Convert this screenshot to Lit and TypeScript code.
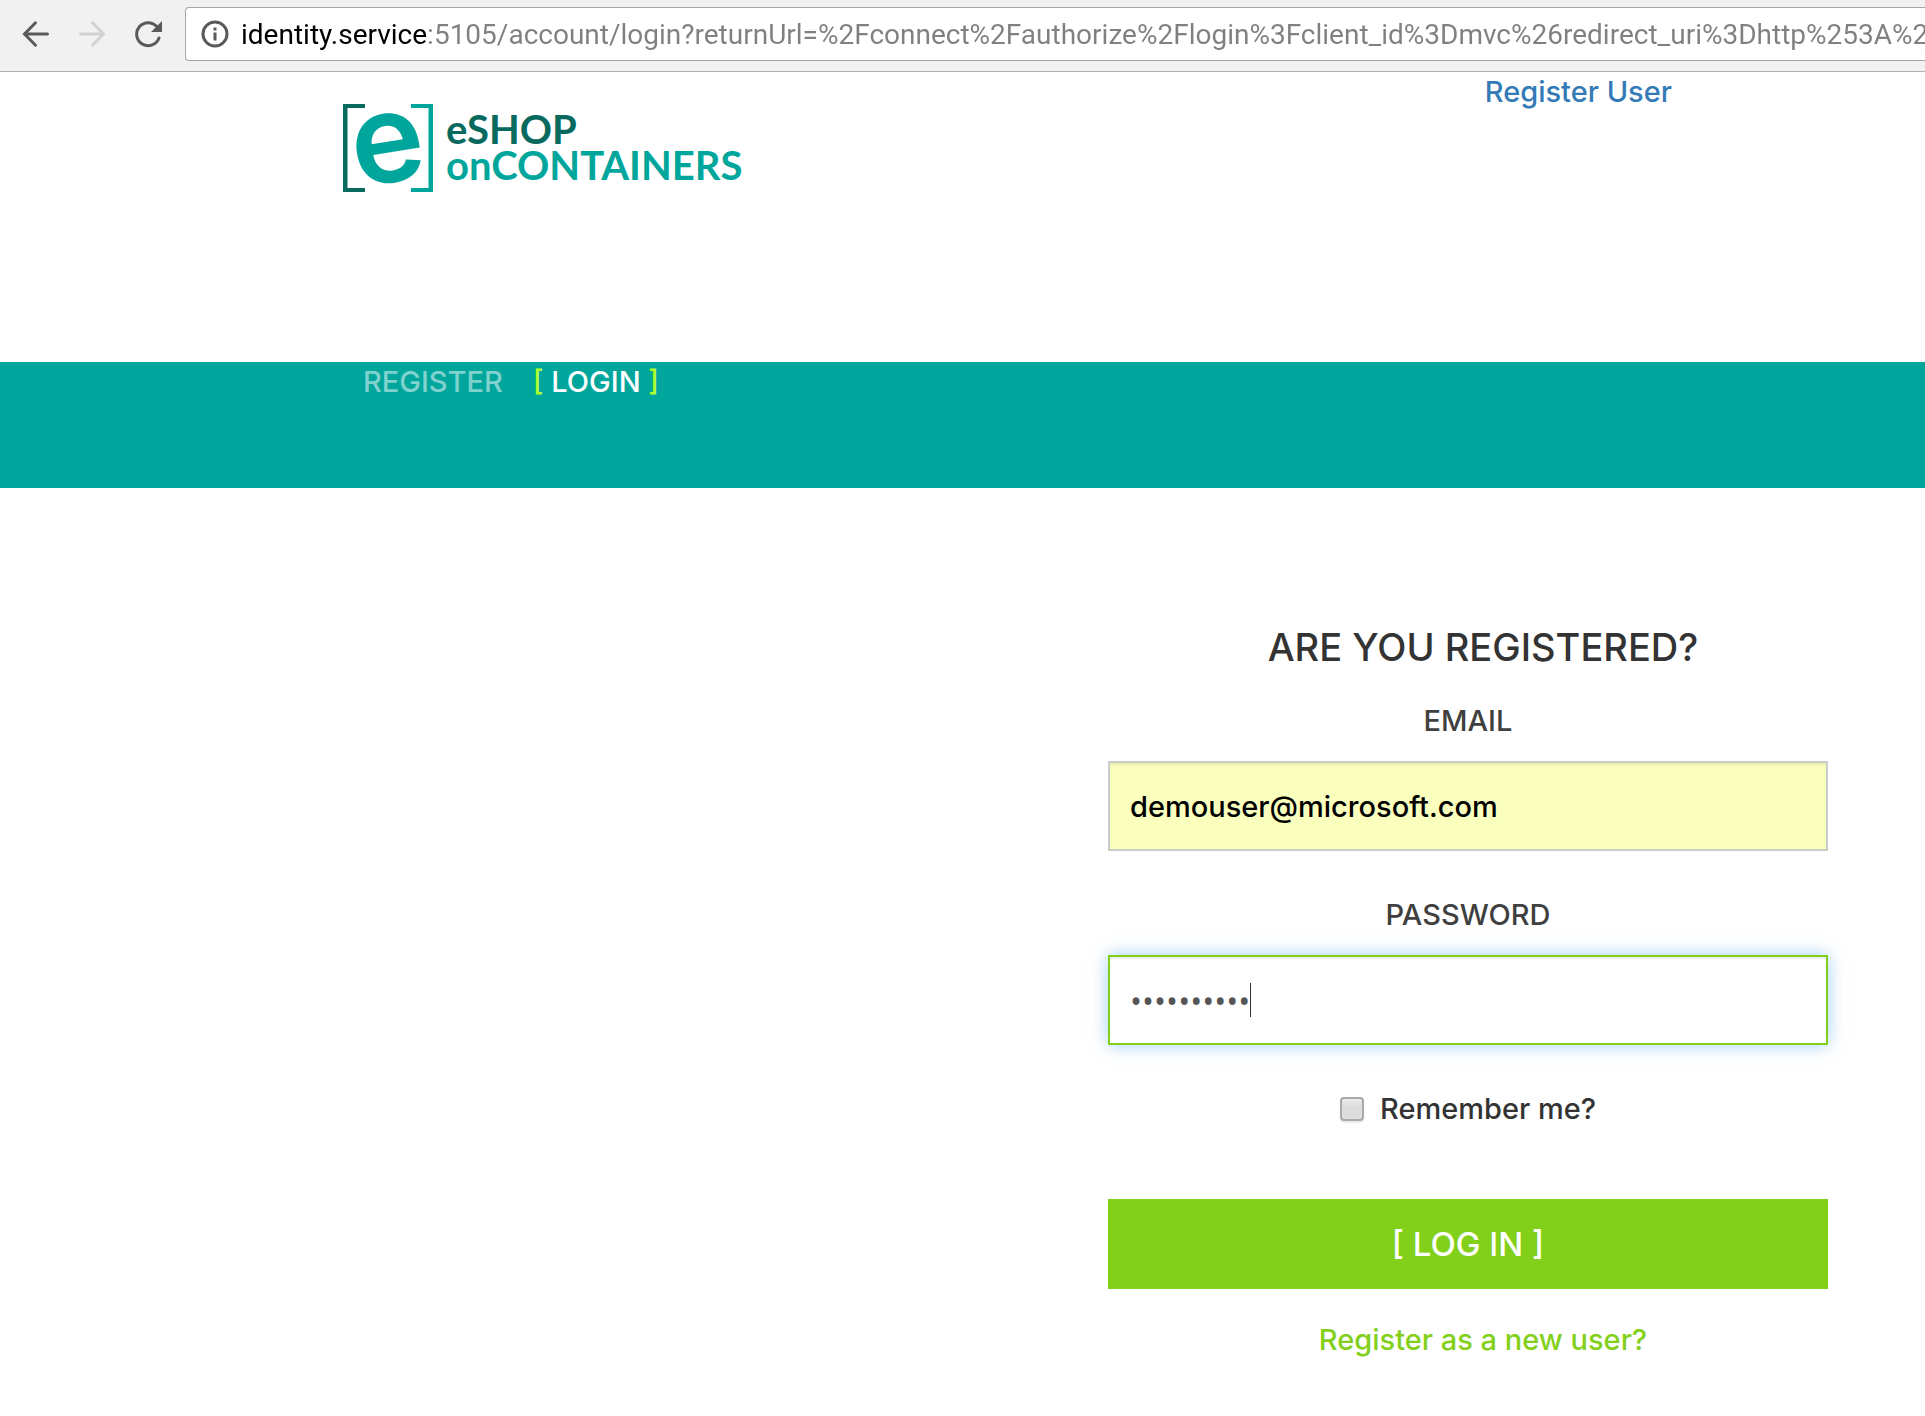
import { LitElement, html, css } from "lit";
import { customElement, state } from "lit/decorators.js";

@customElement("browser-bar")
export class BrowserBar extends LitElement {
  static styles = css`
    :host {
      display: block;
    }
    .bar {
      display: flex;
      align-items: center;
      box-sizing: border-box;
      height: 72px;
      padding: 0 0 4px 22px;
      background: #f1f1f1;
      border-bottom: 1px solid #b0b0b0;
      overflow: hidden;
    }
    .tools {
      display: flex;
      gap: 28px;
      margin-right: 23px;
    }
    .tool {
      display: block;
      width: 28px;
      height: 28px;
      padding: 0;
      border: 0;
      background: none;
      color: #5a5a5a;
    }
    .tool:disabled {
      color: #d2d2d2;
    }
    .icon {
      display: block;
      width: 28px;
      height: 28px;
    }
    .address {
      flex: 1;
      display: flex;
      align-items: center;
      gap: 12px;
      box-sizing: border-box;
      height: 54px;
      min-width: 0;
      padding-left: 15px;
      background: #fff;
      border: 1px solid #a6a6a6;
      border-right: 0;
      border-radius: 4px 0 0 4px;
      color: #5a5a5a;
    }
    .url {
      flex: 1;
      min-width: 0;
      height: 44px;
      padding: 2px 0 0;
      border: 0;
      outline: 0;
      font: 400 28px Roboto, "Open Sans", sans-serif;
      color: transparent;
      background: linear-gradient(to right, #000 187px, #808080 187px);
      -webkit-background-clip: text;
      background-clip: text;
    }
  `;

  @state() private url =
    "identity.service:5105/account/login?returnUrl=%2Fconnect%2Fauthorize%2Flogin%3Fclient_id%3Dmvc%26redirect_uri%3Dhttp%253A%252F";

  render() {
    return html`
      <div class="bar">
        <div class="tools">
          <button class="tool" type="button" aria-label="Back">
            <svg class="icon" viewBox="0 0 28 28" fill="none" stroke="currentColor" stroke-width="3" stroke-linecap="round">
              <path d="M25.500 14H3M13.500 2.800L2.500 14L13.500 25.200" />
            </svg>
          </button>
          <button class="tool" type="button" aria-label="Forward" disabled>
            <svg class="icon" viewBox="0 0 28 28" fill="none" stroke="currentColor" stroke-width="3" stroke-linecap="round">
              <path d="M2.500 14H25M14.500 2.800L25.500 14L14.500 25.200" />
            </svg>
          </button>
          <button class="tool" type="button" aria-label="Reload">
            <svg class="icon" viewBox="0 0 28 28" fill="none">
              <path d="M23 6.800A11.500 11.500 0 1 0 25 18" stroke="currentColor" stroke-width="3" stroke-linecap="round" />
              <path d="M28 1V12H17Z" fill="currentColor" />
            </svg>
          </button>
        </div>
        <div class="address">
          <svg class="icon" viewBox="0 0 28 28" fill="none">
            <circle cx="14" cy="14" r="12" stroke="currentColor" stroke-width="3" />
            <path d="M12.500 7.500h3v3h-3zM12.500 12.500h3v8h-3z" fill="currentColor" />
          </svg>
          <input class="url" type="text" aria-label="Address" spellcheck="false" .value=${this.url} />
        </div>
      </div>
    `;
  }
}

@customElement("shop-logo")
export class ShopLogo extends LitElement {
  static styles = css`
    :host {
      display: block;
    }
    .logo {
      display: block;
      width: 420px;
      height: 88px;
      overflow: visible;
    }
    .mark {
      font: 600 124px Inter, sans-serif;
      fill: #00a69c;
    }
    .name {
      font: 700 40px Lato, sans-serif;
    }
    .dark {
      fill: #08695f;
    }
    .light {
      fill: #00a69c;
    }
  `;

  render() {
    return html`
      <svg class="logo" viewBox="0 0 420 88" role="img" aria-label="eShop on Containers">
        <path class="dark" d="M0 0H22V4H4.500V84H22V88H0Z" />
        <path class="light" d="M68 0H90V88H68V84H85.500V4H68Z" />
        <text class="mark" x="45" y="78" text-anchor="middle" transform="rotate(-9 45 44)">e</text>
        <text class="name dark" x="103" y="40">eSHOP</text>
        <text class="name light" x="103" y="76">onCONTAINERS</text>
      </svg>
    `;
  }
}

@customElement("login-form")
export class LoginForm extends LitElement {
  static styles = css`
    :host {
      display: block;
    }
    .form {
      display: flex;
      flex-direction: column;
      font: 500 29px/40px Inter, "Open Sans", sans-serif;
      color: #333;
      text-align: center;
    }
    .title {
      margin: 0 0 34px;
      padding-left: 30px;
      font-size: 38px;
      line-height: 40px;
      font-weight: 500;
    }
    .field {
      display: flex;
      flex-direction: column;
      gap: 20px;
      margin-bottom: 44px;
    }
    .label {
      color: #404040;
    }
    .box {
      position: relative;
      display: flex;
    }
    .input {
      flex: 1;
      min-width: 0;
      box-sizing: border-box;
      height: 90px;
      padding: 0 20px;
      border: 2px solid #ccc;
      border-radius: 0;
      outline: 0;
      background: #fff;
      box-shadow: inset 0 2px 2px rgba(0, 0, 0, 0.075);
      font: inherit;
      color: #555;
    }
    .filled {
      background: #faffbd;
      color: #000;
    }
    .active {
      border-color: #83d01b;
      box-shadow: inset 0 2px 2px rgba(0, 0, 0, 0.075), 0 0 16px rgba(102, 175, 233, 0.6);
      font-family: "Open Sans", sans-serif;
      font-size: 32px;
      caret-color: transparent;
    }
    .caret {
      position: absolute;
      left: 142px;
      top: 28px;
      width: 1px;
      height: 34px;
      background: #333;
    }
    .remember {
      display: flex;
      justify-content: center;
      align-items: center;
      gap: 16px;
      margin-bottom: 70px;
    }
    .check {
      appearance: none;
      box-sizing: border-box;
      width: 24px;
      height: 24px;
      margin: 0;
      border: 2px solid #a9a9a9;
      border-radius: 4px;
      background: linear-gradient(#ededed, #dcdcdc 40%, #dedede);
      box-shadow: 0 2px 1px rgba(0, 0, 0, 0.08);
    }
    .check:checked {
      background: #83d01b;
    }
    .submit {
      height: 90px;
      margin: 0 0 31px;
      border: 0;
      border-radius: 0;
      background: #83d01b;
      color: #fff;
      font: inherit;
      font-size: 33px;
    }
    .register {
      padding-left: 30px;
    }
    .link {
      color: #83d01b;
      text-decoration: none;
    }
  `;

  render() {
    return html`
      <form class="form" @submit=${(e: Event) => e.preventDefault()}>
        <h4 class="title">ARE YOU REGISTERED?</h4>
        <div class="field">
          <label class="label" for="email">EMAIL</label>
          <div class="box">
            <input class="input filled" id="email" type="email" value="demouser@microsoft.com" />
          </div>
        </div>
        <div class="field">
          <label class="label" for="password">PASSWORD</label>
          <div class="box">
            <input class="input active" id="password" type="password" value="Pass@word1" />
            <span class="caret"></span>
          </div>
        </div>
        <div class="remember">
          <input class="check" id="remember" type="checkbox" />
          <label for="remember">Remember me?</label>
        </div>
        <button class="submit" type="submit">[ LOG IN ]</button>
        <div class="register"><a class="link" href="#register">Register as a new user?</a></div>
      </form>
    `;
  }
}

@customElement("app-root")
export class AppRoot extends LitElement {
  static styles = css`
    :host {
      display: block;
      min-height: 100vh;
      background: #fff;
      font: 500 29px/40px Inter, "Open Sans", sans-serif;
    }
    .header {
      display: flex;
      justify-content: space-between;
      align-items: flex-start;
      box-sizing: border-box;
      height: 290px;
      padding: 0 253px 0 343px;
    }
    .logo {
      margin-top: 32px;
    }
    .user {
      color: #337ab7;
      text-decoration: none;
    }
    .nav {
      display: flex;
      gap: 30px;
      box-sizing: border-box;
      height: 126px;
      padding-left: 363px;
      background: #00a69c;
    }
    .tab {
      color: rgba(255, 255, 255, 0.5);
      text-decoration: none;
    }
    .current {
      color: #fff;
    }
    .bracket {
      color: #adff2f;
    }
    .main {
      display: flex;
      justify-content: flex-end;
      padding: 139px 97px 48px;
    }
    .login {
      flex: 0 1 720px;
    }
  `;

  render() {
    return html`
      <browser-bar></browser-bar>
      <header class="header">
        <shop-logo class="logo"></shop-logo>
        <a class="user" href="#register">Register User</a>
      </header>
      <nav class="nav">
        <a class="tab" href="#register">REGISTER</a>
        <a class="tab current" href="#login"><span class="bracket">[</span> LOGIN <span class="bracket">]</span></a>
      </nav>
      <main class="main">
        <login-form class="login"></login-form>
      </main>
    `;
  }
}
